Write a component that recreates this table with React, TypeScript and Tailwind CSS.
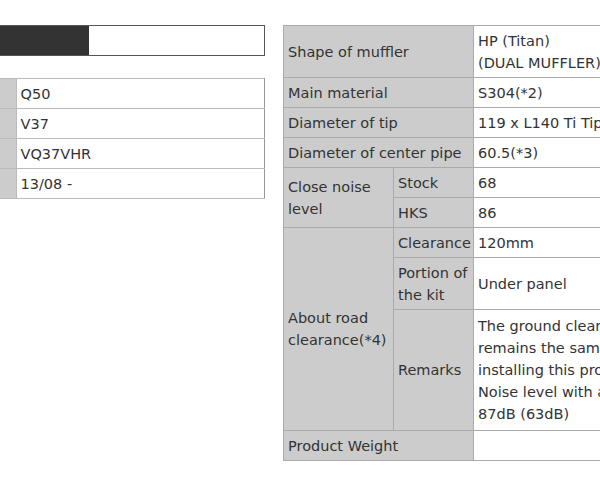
const leftRows = ["Q50", "V37", "VQ37VHR", "13/08 -"];

const th = "bg-[#cccccc] border border-[#aaaaaa] px-[4px] py-0 text-left font-normal align-middle";
const td = "bg-white border border-[#aaaaaa] px-[4px] py-0 align-middle whitespace-nowrap";

export default function App() {
  return (
    <div
      className="w-[600px] h-[479px] overflow-hidden bg-white text-[#333333] text-[14.5px] leading-[22px]"
      style={{ fontFamily: '"DejaVu Sans", Verdana, sans-serif' }}
    >
      <div className="flex pt-[25px]">
        {/* Left column */}
        <div className="w-[265px] shrink-0">
          <div className="flex h-[31px] border-y border-r border-[#555555]">
            <div className="w-[89px] bg-[#333333]" />
            <div className="flex-1 bg-white" />
          </div>
          <table className="mt-[22px] w-[265px] border-collapse">
            <tbody>
              {leftRows.map((v, i) => (
                <tr key={i} className="h-[30px]">
                  <th className="w-[16px] bg-[#cccccc] border border-[#bbbbbb] border-l-0 p-0" />
                  <td className="bg-white border border-[#bbbbbb] border-r-[#999999] px-[4px] py-0 align-middle">{v}</td>
                </tr>
              ))}
            </tbody>
          </table>
        </div>

        {/* Right spec table */}
        <div className="ml-[18px] shrink-0">
          <table className="border-collapse table-fixed w-[590px] border border-[#dddddd]">
            <colgroup>
              <col className="w-[110px]" />
              <col className="w-[80px]" />
              <col className="w-[400px]" />
            </colgroup>
            <tbody>
              <tr className="h-[52px]">
                <th colSpan={2} className={th}>Shape of muffler</th>
                <td className={td}>HP (Titan)<br />(DUAL MUFFLER)</td>
              </tr>
              <tr className="h-[30px]">
                <th colSpan={2} className={th}>Main material</th>
                <td className={td}>S304(*2)</td>
              </tr>
              <tr className="h-[30px]">
                <th colSpan={2} className={th}>Diameter of tip</th>
                <td className={td}>119 x L140 Ti Tip</td>
              </tr>
              <tr className="h-[30px]">
                <th colSpan={2} className={th + " whitespace-nowrap"}>Diameter of center pipe</th>
                <td className={td}>60.5(*3)</td>
              </tr>
              <tr className="h-[30px]">
                <th rowSpan={2} className={th}>Close noise<br />level</th>
                <th className={th}>Stock</th>
                <td className={td}>68</td>
              </tr>
              <tr className="h-[30px]">
                <th className={th}>HKS</th>
                <td className={td}>86</td>
              </tr>
              <tr className="h-[30px]">
                <th rowSpan={3} className={th}>About road<br />clearance(*4)</th>
                <th className={th}>Clearance</th>
                <td className={td}>120mm</td>
              </tr>
              <tr className="h-[52px]">
                <th className={th}>Portion of<br />the kit</th>
                <td className={td}>Under panel</td>
              </tr>
              <tr className="h-[121px]">
                <th className={th}>Remarks</th>
                <td className={td}>
                  The ground clearance<br />
                  remains the same after<br />
                  installing this product.<br />
                  Noise level with acceleration<br />
                  87dB (63dB)
                </td>
              </tr>
              <tr className="h-[30px]">
                <th colSpan={2} className={th}>Product Weight</th>
                <td className={td}></td>
              </tr>
            </tbody>
          </table>
        </div>
      </div>
    </div>
  );
}
